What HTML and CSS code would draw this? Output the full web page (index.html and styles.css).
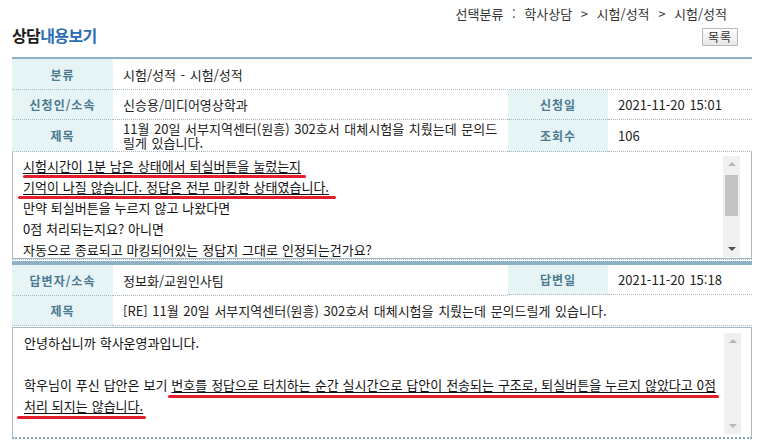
FILE: index.html
```html
<!DOCTYPE html>
<html lang="ko">
<head>
<meta charset="utf-8">
<title>상담내용보기</title>
<link rel="stylesheet" href="styles.css">
</head>
<body>
<div class="page">
  <div class="crumb">선택분류 : 학사상담 &gt; 시험/성적 &gt; 시험/성적</div>
  <div class="titlebar">
    <h1 class="title">상담<span class="blue">내용보기</span></h1>
    <button class="btn" type="button">목록</button>
  </div>

  <div class="grid">
    <div class="lab">분류</div>
    <div class="val span3">시험/성적 - 시험/성적</div>

    <div class="lab">신청인/소속</div>
    <div class="val">신승용/미디어영상학과</div>
    <div class="lab">신청일</div>
    <div class="val">2021-11-20 15:01</div>

    <div class="lab tall">제목</div>
    <div class="val tall two">
      <div class="ln">11월 20일 서부지역센터(원흥) 302호서 대체시험을 치뤘는데 문의드</div>
      <div class="ln">릴게 있습니다.</div>
    </div>
    <div class="lab tall">조회수</div>
    <div class="val tall">106</div>
  </div>

  <div class="box q">
    <div class="text">
      <span class="mark m1">시험시간이 1분 남은 상태에서 퇴실버튼을 눌렀는지</span><br>
      <span class="mark m2">기억이 나질 않습니다. 정답은 전부 마킹한 상태였습니다.</span><br>
      만약 퇴실버튼을 누르지 않고 나왔다면<br>
      0점 처리되는지요? 아니면<br>
      자동으로 종료되고 마킹되어있는 정답지 그대로 인정되는건가요?<br>
      &nbsp;
    </div>
    <div class="sb">
      <div class="arrow up"></div>
      <div class="thumb"></div>
      <div class="track"></div>
      <div class="arrow down dark"></div>
    </div>
  </div>

  <div class="divider"></div>

  <div class="grid answer">
    <div class="lab">답변자/소속</div>
    <div class="val">정보화/교원인사팀</div>
    <div class="lab">답변일</div>
    <div class="val">2021-11-20 15:18</div>

    <div class="lab">제목</div>
    <div class="val span3">[RE] 11월 20일 서부지역센터(원흥) 302호서 대체시험을 치뤘는데 문의드릴게 있습니다.</div>
  </div>

  <div class="box a">
    <div class="text">
      안녕하십니까 학사운영과입니다.<br>
      <br>
      <span class="nowrap">학우님이 푸신 답안은 보기 <span class="mark m3">번호를 정답으로 터치하는 순간 실시간으로 답안이 전송되는 구조로, 퇴실버튼을 누르지 않았다고 0점</span></span><br>
      <span class="mark m4">처리 되지는 않습니다.</span>
    </div>
    <div class="sb">
      <div class="arrow up"></div>
      <div class="track"></div>
      <div class="arrow down"></div>
    </div>
  </div>
</div>
</body>
</html>
```

FILE: styles.css
```css
* { box-sizing: border-box; }

html, body {
  margin: 0;
  padding: 0;
  background: #ffffff;
}

body {
  font-family: "Noto Sans CJK KR", "Noto Sans", sans-serif;
  font-size: 13px;
  color: #222222;
}

.page {
  width: 760px;
  height: 442px;
  padding: 0 8px 0 12px;
  overflow: hidden;
}

.crumb {
  margin-top: 6px;
  height: 16px;
  line-height: 16px;
  text-align: right;
  padding-right: 25px;
  color: #333333;
  word-spacing: 5px;
}

.titlebar {
  display: flex;
  justify-content: space-between;
  align-items: flex-start;
  height: 35px;
}

.title {
  margin: 4px 0 0 0;
  font-size: 16px;
  line-height: 18px;
  font-weight: 700;
  letter-spacing: -0.6px;
  color: #1a1a1a;
}

.title .blue { color: #2b6db2; }

.btn {
  margin: 6px 14px 0 0;
  width: 36px;
  height: 18px;
  padding: 0;
  border: 1px solid #b9b9b9;
  background: linear-gradient(#ffffff, #e6e6e6);
  font-family: inherit;
  font-size: 12px;
  line-height: 16px;
  letter-spacing: 1px;
  color: #333333;
}

.grid {
  display: grid;
  grid-template-columns: 101px 395px 100px 144px;
  border-top: 2px solid #8fb1c6;
}

.grid > div {
  border-bottom: 1px dotted #a9b9c1;
  display: flex;
  align-items: center;
}

.grid > div:nth-child(1), .grid > div:nth-child(2) { height: 31px; }

.lab {
  justify-content: center;
  background: #e6f4f6;
  color: #4b7a90;
  font-size: 12px;
  font-weight: 700;
  letter-spacing: 1px;
  height: 30px;
}

.val {
  padding-left: 10px;
  height: 30px;
  color: #222222;
  word-spacing: 1px;
}

.span3 { grid-column: span 3; }

.grid .tall { height: 32px; }

.grid .two {
  flex-direction: column;
  align-items: flex-start;
  justify-content: center;
}

.two .ln {
  height: 14px;
  line-height: 14px;
  white-space: nowrap;
}

.box {
  display: flex;
  border: 1px solid #a5bcc8;
  border-top: none;
  background: #ffffff;
}

.box .text {
  flex: 1;
  overflow: hidden;
  line-height: 21px;
  color: #111111;
  word-spacing: 0.3px;
  padding-left: 10px;
}

.box.q { height: 107px; }
.box.q .text { padding-top: 3px; }

.box.a {
  height: 112px;
  border-top: 1px solid #a5bcc8;
  border-bottom: 2px dotted #7fa7bf;
  margin-top: 1px;
}
.box.a .text { padding-top: 4px; padding-left: 11px; }

.nowrap { white-space: nowrap; }

.mark {
  position: relative;
  text-decoration: underline;
  text-underline-offset: 2px;
}

.mark::after {
  content: "";
  position: absolute;
  height: 3px;
  bottom: -3px;
  background: #e41e2b;
  border-radius: 2px;
}

.m1::after { left: 0; right: -5px; }
.m2::after { left: -5px; right: -7px; bottom: -3px; }
.m3::after { left: -3px; right: -3px; bottom: -4px; }
.m4::after { left: -7px; right: -3px; bottom: -4px; }

.sb {
  width: 17px;
  margin: 4px 11px 1px 0;
  display: flex;
  flex-direction: column;
  background: #f0f0f0;
}

.box.a .sb { margin: 5px 10px 3px 0; }

.arrow {
  height: 17px;
  flex: none;
  position: relative;
}

.arrow::after {
  content: "";
  position: absolute;
  left: 5px;
  width: 0;
  height: 0;
  border-left: 4px solid transparent;
  border-right: 4px solid transparent;
}

.arrow.up::after {
  top: 6px;
  border-bottom: 4px solid #b8b8b8;
}

.arrow.down::after {
  top: 7px;
  border-top: 4px solid #b8b8b8;
}

.arrow.down.dark::after { border-top-color: #505050; }

.thumb {
  height: 41px;
  margin: 2px 2px 0 2px;
  background: #c3c3c3;
  flex: none;
}

.track { flex: 1; }

.divider {
  height: 4px;
  border-top: 1px dotted #a9b9c1;
  border-bottom: 2px solid #8fb1c6;
  margin-top: 0;
}
```
